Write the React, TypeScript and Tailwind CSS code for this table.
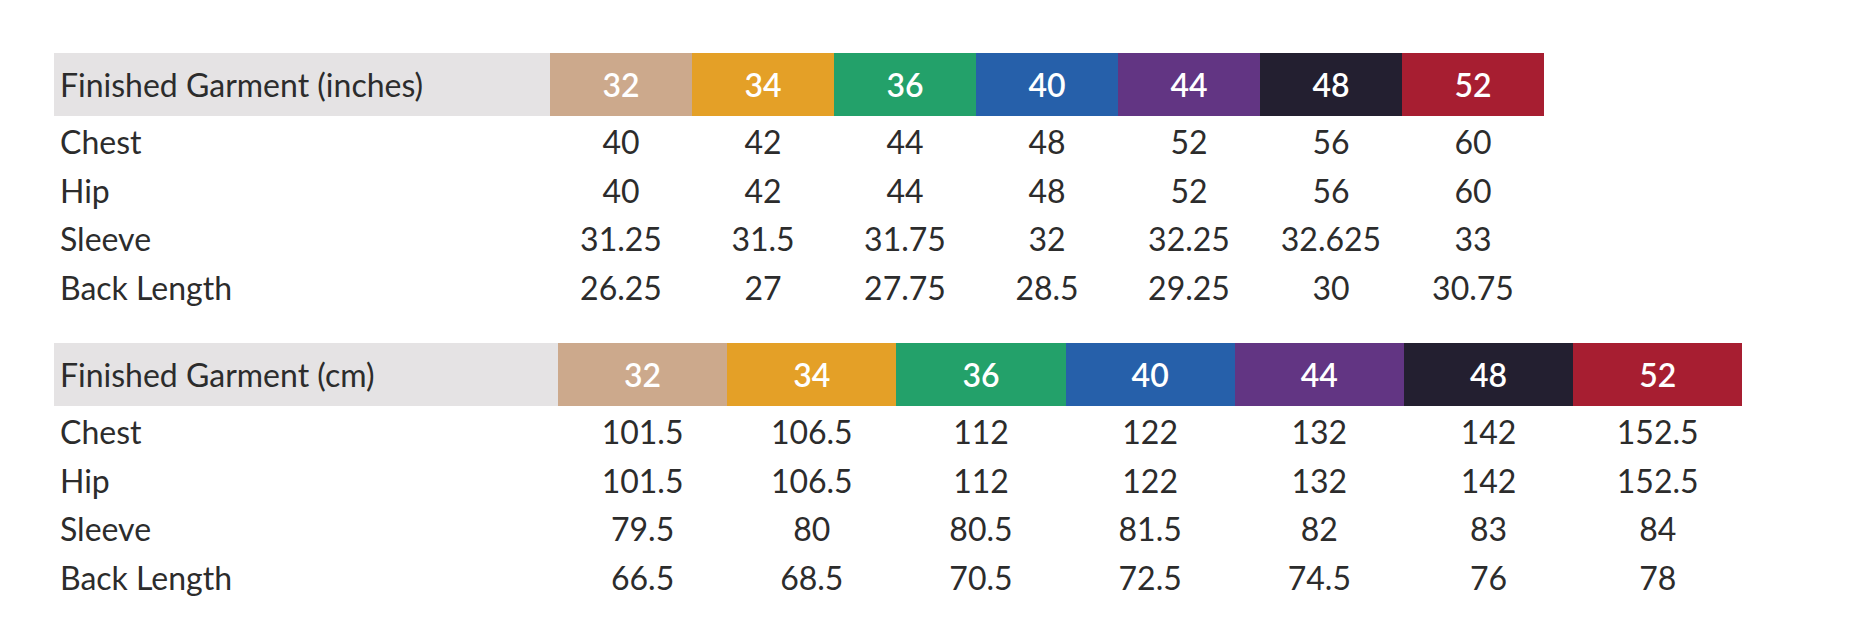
import React from "react";

const sizes = [
  { label: "32", bg: "bg-[#cca98c]" },
  { label: "34", bg: "bg-[#e4a027]" },
  { label: "36", bg: "bg-[#23a16a]" },
  { label: "40", bg: "bg-[#2660aa]" },
  { label: "44", bg: "bg-[#623583]" },
  { label: "48", bg: "bg-[#231f30]" },
  { label: "52", bg: "bg-[#a71e31]" },
];

const inches: [string, string[]][] = [
  ["Chest", ["40", "42", "44", "48", "52", "56", "60"]],
  ["Hip", ["40", "42", "44", "48", "52", "56", "60"]],
  ["Sleeve", ["31.25", "31.5", "31.75", "32", "32.25", "32.625", "33"]],
  ["Back Length", ["26.25", "27", "27.75", "28.5", "29.25", "30", "30.75"]],
];

const cm: [string, string[]][] = [
  ["Chest", ["101.5", "106.5", "112", "122", "132", "142", "152.5"]],
  ["Hip", ["101.5", "106.5", "112", "122", "132", "142", "152.5"]],
  ["Sleeve", ["79.5", "80", "80.5", "81.5", "82", "83", "84"]],
  ["Back Length", ["66.5", "68.5", "70.5", "72.5", "74.5", "76", "78"]],
];

function Table({
  title,
  rows,
  cols,
}: {
  title: string;
  rows: [string, string[]][];
  cols: string;
}) {
  return (
    <div className={`grid ${cols}`}>
      <div className="h-[63px] bg-[#e5e3e4] flex items-center pl-[6px] text-[#2c2c2c]">
        {title}
      </div>
      {sizes.map((s) => (
        <div
          key={s.label}
          className={`h-[63px] ${s.bg} flex items-center justify-center text-white font-semibold`}
        >
          {s.label}
        </div>
      ))}
      {rows.map(([name, vals], ri) => (
        <React.Fragment key={name}>
          <div
            className={`h-[48.5px] flex items-center pl-[6px] text-[#2c2c2c] ${ri === 0 ? "mt-[2px]" : ""}`}
          >
            {name}
          </div>
          {vals.map((v, i) => (
            <div
              key={i}
              className={`h-[48.5px] flex items-center justify-center text-[#2c2c2c] ${ri === 0 ? "mt-[2px]" : ""}`}
            >
              {v}
            </div>
          ))}
        </React.Fragment>
      ))}
    </div>
  );
}

export default function App() {
  return (
    <div
      className="w-[1862px] h-[640px] bg-white pl-[54px] pt-[53px] flex flex-col gap-[31px] text-[32px] leading-none"
      style={{ fontFamily: "Lato, 'Noto Sans', sans-serif" }}
    >
      <Table
        title="Finished Garment (inches)"
        rows={inches}
        cols="grid-cols-[496px_repeat(7,142px)]"
      />
      <Table
        title="Finished Garment (cm)"
        rows={cm}
        cols="grid-cols-[504px_repeat(7,169.2px)]"
      />
    </div>
  );
}
